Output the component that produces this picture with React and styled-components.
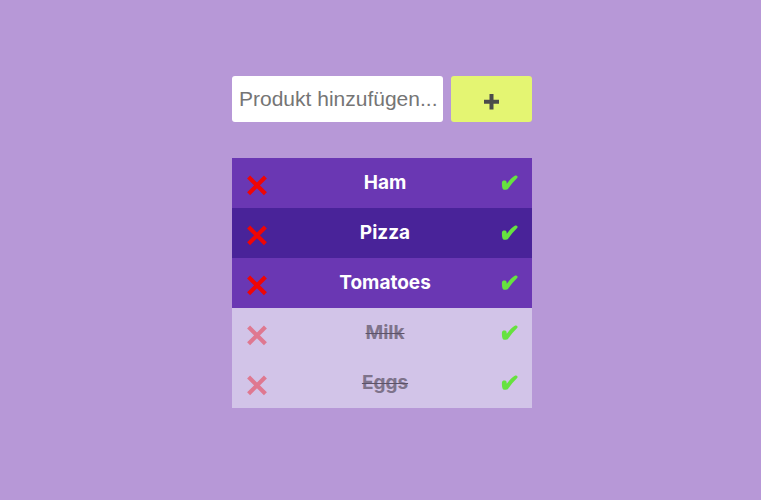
import React, { useState } from "react";
import styled, { createGlobalStyle } from "styled-components";

const GlobalStyle = createGlobalStyle`
  *, *::before, *::after { box-sizing: border-box; }
  body {
    margin: 0;
    padding-left: 3px;
    background: #b798d7;
    font-family: Inter, "Liberation Sans", sans-serif;
  }
`;

const Page = styled.main`
  display: flex;
  flex-direction: column;
  gap: 36px;
  width: 100%;
  max-width: 300px;
  margin: 0 auto;
  padding-top: 76px;
`;

const AddForm = styled.form`
  display: flex;
  gap: 8px;
`;

const ProductInput = styled.input`
  flex: 1;
  min-width: 0;
  height: 46px;
  padding: 0 4px 0 7px;
  border: 0;
  border-radius: 3px;
  background: #fff;
  color: #333;
  font-family: "Liberation Sans", Arial, sans-serif;
  font-size: 21px;

  &::placeholder { color: #757575; opacity: 1; }
`;

const AddButton = styled.button`
  display: flex;
  align-items: center;
  justify-content: center;
  width: 81px;
  padding: 6px 0 0;
  border: 0;
  border-radius: 3px;
  background: #e4f572;
  color: #4b4b4b;
  cursor: pointer;
`;

const List = styled.ul`
  margin: 0;
  padding: 0;
  list-style: none;
`;

const Item = styled.li`
  display: grid;
  grid-template-columns: 50px 1fr 44px;
  align-items: center;
  height: 50px;
  background: ${({ $done, $dark }) => ($done ? "#d2c4e8" : $dark ? "#492399" : "#6a37b3")};
`;

const Name = styled.span`
  text-align: center;
  font-size: 19px;
  font-weight: 700;
  line-height: 24px;
  color: ${({ $done }) => ($done ? "#7e738b" : "#fff")};
  text-decoration: ${({ $done }) => ($done ? "line-through #5c5268 1px" : "none")};
`;

const IconButton = styled.button`
  display: flex;
  align-items: center;
  justify-content: center;
  height: 50px;
  padding: 0;
  border: 0;
  background: none;
  cursor: pointer;
`;

const RemoveButton = styled(IconButton)`
  padding-top: 6px;
  color: ${({ $done }) => ($done ? "#df7890" : "#f00505")};
`;

const DoneButton = styled(IconButton)`
  color: #66e23f;
`;

const PlusIcon = () => (
  <svg width="17" height="16" viewBox="0 0 17 16" aria-hidden="true">
    <path d="M8.5 0V15.5M1 7.7H16" stroke="currentColor" strokeWidth="4" />
  </svg>
);

const CrossIcon = () => (
  <svg width="20" height="22" viewBox="0 0 20 22" aria-hidden="true">
    <path d="M1.6 2L18.4 18.8M18.4 2L1.6 18.8" stroke="currentColor" strokeWidth="4.2" />
  </svg>
);

const CheckIcon = () => (
  <svg width="18" height="16" viewBox="0 0 18 16" aria-hidden="true">
    <path
      d="M1.1 6.8C1.7 5.3 4.8 5.2 5.4 6.6C5.7 7.3 5.6 8 5.8 8.8C8.2 5.5 10.8 2.6 13.8 0.8C14.8 0.3 16.1 0.6 16.5 1.4C16.8 2.2 16.4 2.9 15.7 3.6C12.5 6.8 9.8 10 7.3 13.4C6.2 15 3.2 15.3 2 14.2C1 13.3 0.6 8.2 1.1 6.8Z"
      fill="currentColor"
    />
  </svg>
);

const initialProducts = [
  { name: "Ham", done: false },
  { name: "Pizza", done: false },
  { name: "Tomatoes", done: false },
  { name: "Milk", done: true },
  { name: "Eggs", done: true },
];

export default function App() {
  const [products, setProducts] = useState(initialProducts);
  const [draft, setDraft] = useState("");

  const add = (event) => {
    event.preventDefault();
    const name = draft.trim();
    if (!name) return;
    setProducts([{ name, done: false }, ...products]);
    setDraft("");
  };
  const remove = (index) => setProducts(products.filter((_, i) => i !== index));
  const toggle = (index) =>
    setProducts(products.map((p, i) => (i === index ? { ...p, done: !p.done } : p)));

  return (
    <>
      <GlobalStyle />
      <Page>
        <AddForm onSubmit={add}>
          <ProductInput
            type="text"
            aria-label="Produkt"
            placeholder="Produkt hinzufügen..."
            value={draft}
            onChange={(event) => setDraft(event.target.value)}
          />
          <AddButton type="submit" aria-label="Hinzufügen">
            <PlusIcon />
          </AddButton>
        </AddForm>
        <List>
          {products.map(({ name, done }, index) => (
            <Item key={name} $done={done} $dark={index % 2 === 1}>
              <RemoveButton type="button" $done={done} aria-label={`${name} entfernen`} onClick={() => remove(index)}>
                <CrossIcon />
              </RemoveButton>
              <Name $done={done}>{name}</Name>
              <DoneButton type="button" aria-label={`${name} erledigt`} onClick={() => toggle(index)}>
                <CheckIcon />
              </DoneButton>
            </Item>
          ))}
        </List>
      </Page>
    </>
  );
}
